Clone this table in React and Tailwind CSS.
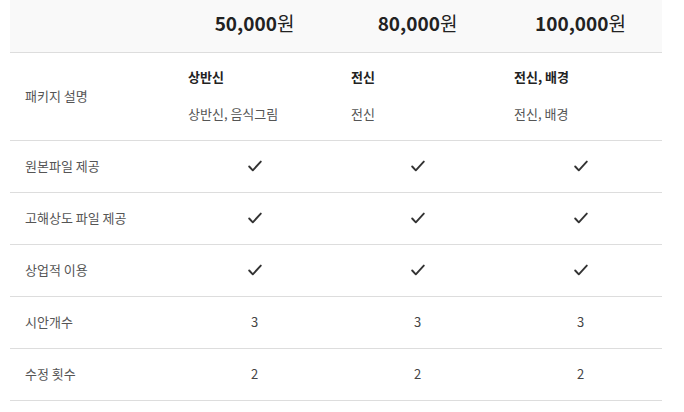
import React from "react";

const Check = () => (
  <svg width="14" height="12" viewBox="0 0 14 12" fill="none">
    <polyline points="1.2,6.5 4.8,10.3 12.8,1.6" stroke="#333333" strokeWidth="1.9" strokeLinecap="round" strokeLinejoin="round" />
  </svg>
);

const rows = [
  { label: "원본파일 제공", vals: ["c", "c", "c"] },
  { label: "고해상도 파일 제공", vals: ["c", "c", "c"] },
  { label: "상업적 이용", vals: ["c", "c", "c"] },
  { label: "시안개수", vals: ["3", "3", "3"] },
  { label: "수정 횟수", vals: ["2", "2", "2"] },
];

export default function App() {
  return (
    <div
      className="w-[684px] h-[412px] bg-white"
      style={{ fontFamily: '"Noto Sans CJK KR", "Noto Sans", sans-serif' }}
    >
      <div className="ml-[10px] w-[652px]">
        <div className="grid grid-cols-[163px_163px_163px_163px] h-[53px] bg-[#f9f9f9] border-b border-[#dddddd] items-center">
          <div />
          {["50,000", "80,000", "100,000"].map((p) => (
            <div key={p} className="text-center text-[#222] pb-[7px] leading-none">
              <span className="text-[19px] font-bold">{p}</span>
              <span className="text-[19px]">원</span>
            </div>
          ))}
        </div>
        <div className="grid grid-cols-[163px_163px_163px_163px] h-[88px] border-b border-[#dddddd] items-center">
          <div className="pl-[15px] text-[13px] text-[#555] pb-[2px]">패키지 설명</div>
          {[
            ["상반신", "상반신, 음식그림"],
            ["전신", "전신"],
            ["전신, 배경", "전신, 배경"],
          ].map(([a, b], i) => (
            <div key={i} className="pl-[15px] flex flex-col gap-[18px] pb-[3px]">
              <div className="text-[13px] font-bold text-[#222] leading-[19px]">{a}</div>
              <div className="text-[13px] text-[#555] leading-[19px]">{b}</div>
            </div>
          ))}
        </div>
        {rows.map((r) => (
          <div
            key={r.label}
            className="grid grid-cols-[163px_163px_163px_163px] h-[52px] border-b border-[#dddddd] items-center"
          >
            <div className="pl-[15px] text-[13px] text-[#555] pb-[2px]">{r.label}</div>
            {r.vals.map((v, i) => (
              <div key={i} className="flex justify-center items-center text-[13px] text-[#444] pb-[2px]">
                {v === "c" ? <Check /> : v}
              </div>
            ))}
          </div>
        ))}
      </div>
    </div>
  );
}
